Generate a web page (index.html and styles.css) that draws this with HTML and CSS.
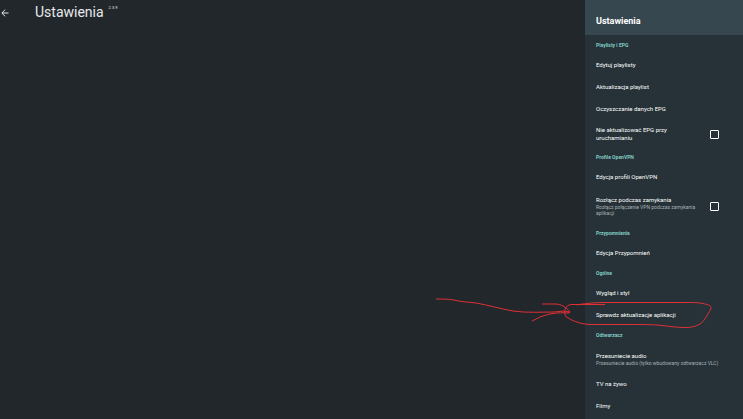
FILE: index.html
```html
<!DOCTYPE html>
<html lang="pl">
<head>
    <meta charset="UTF-8">
    <meta name="viewport" content="width=device-width, initial-scale=1.0">
    <title>Ustawienia</title>
    <link rel="stylesheet" href="styles.css">
</head>
<body>
    <main class="content">
        <header class="topbar">
            <button type="button" class="back" aria-label="Wstecz">
                <svg viewBox="0 0 8 8" width="8" height="8">
                    <path d="M7.5 4H1M4.1 .7L.8 4l3.3 3.3" />
                </svg>
            </button>
            <h1>Ustawienia</h1>
            <span class="version">2.3.9</span>
        </header>
    </main>

    <aside class="panel">
        <header class="panel-header">
            <h2>Ustawienia</h2>
        </header>
        <div class="list">
            <h3>Playlisty i EPG</h3>
            <button type="button" class="item">Edytuj playlisty</button>
            <button type="button" class="item">Aktualizacja playlist</button>
            <button type="button" class="item">Oczyszczanie danych EPG</button>
            <label class="item item-check">
                <span class="label">Nie aktualizować EPG przy uruchamianiu</span>
                <input type="checkbox">
            </label>

            <h3>Profile OpenVPN</h3>
            <button type="button" class="item">Edycja profili OpenVPN</button>
            <label class="item item-check item-tall">
                <span class="label">Rozłącz podczas zamykania
                    <small>Rozłącz połączenie VPN podczas zamykania aplikacji</small>
                </span>
                <input type="checkbox">
            </label>

            <h3>Przypomnienia</h3>
            <button type="button" class="item">Edycja Przypomnień</button>

            <h3>Ogólne</h3>
            <button type="button" class="item">Wygląd i styl</button>
            <button type="button" class="item">Sprawdz aktualizacje aplikacji</button>

            <h3>Odtwarzacz</h3>
            <button type="button" class="item item-sub">Przesuniecie audio
                <small>Przesuniecie audio (tylko wbudowany odtwarzacz VLC)</small>
            </button>
            <button type="button" class="item">TV na żywo</button>
            <button type="button" class="item">Filmy</button>
        </div>

        <!-- Hand-drawn arrow and circle around the update item -->
        <svg class="marker" viewBox="0 0 280 36" width="280" height="36" aria-hidden="true">
            <path d="M1 4c6 0 12 0 18 1 7 2 15 2 22 3 12 2 25 6 37 8 13 2 28 1 41 1l10-1 5 1" />
            <path d="M107 9h13c6 0 11 3 15 8l-1 1c-12-1-21 1-29 4l-8 4" />
            <path d="M170 9.500h-33c-4 0-6 2-7 5-1 3 0 5 1 7 5 4 13 7 23 8h46c12 0 18 0 27 1 9 1 15 2 23 2 8 0 14-2 18-6 3-4 6-9 8-13 1-3-4-4-8-5-5-1-10-1-16-1h-83c-9 0-18 1-25 2l-1 1" />
        </svg>
    </aside>
</body>
</html>
```

FILE: styles.css
```css
* {
    box-sizing: border-box;
}

body {
    margin: 0;
    display: flex;
    height: 100vh;
    overflow: hidden;
    background-color: #22272b;
    color: #e8eaeb;
    font-family: Roboto, "Noto Sans", sans-serif;
}

h1, h2, h3 {
    margin: 0;
    font-weight: 400;
}

button {
    border: 0;
    background: none;
    color: inherit;
    font-family: inherit;
    cursor: pointer;
}

/* Main area */
.content {
    flex: 1;
}

.topbar {
    display: flex;
    align-items: flex-start;
    padding: 4px 1px;
}

.back {
    padding: 5px 0;
    margin-right: 26px;
    line-height: 0;
}

.back path {
    fill: none;
    stroke: #e8eaeb;
    stroke-width: 1;
}

h1 {
    font-size: 14px;
    line-height: 16px;
}

.version {
    margin-left: 5px;
    font-size: 4px;
    line-height: 7px;
}

/* Settings panel */
.panel {
    position: relative;
    display: flex;
    flex-direction: column;
    width: 158px;
    background-color: #263238;
}

.panel-header {
    padding: 14px 11px 7px;
    background-color: #37474f;
}

h2 {
    color: #fff;
    font-size: 9px;
    line-height: 14px;
    font-weight: 700;
}

.list {
    flex: 1;
    min-height: 0;
    padding-top: 1px;
    overflow: hidden;
}

h3 {
    padding: 0 11px;
    color: #80cbc4;
    font-size: 5px;
    line-height: 18px;
    font-weight: 700;
}

.item {
    display: block;
    width: 100%;
    min-height: 22px;
    padding: 0 11px;
    color: #fff;
    font-size: 6px;
    font-weight: 400;
    line-height: 8px;
    text-align: left;
}

.item small {
    display: block;
    color: #a9b0b4;
    font-size: 5px;
    line-height: 6px;
}

.item-check {
    display: flex;
    align-items: center;
    justify-content: space-between;
    min-height: 28px;
    padding-right: 24px;
}

.item-check .label {
    width: 105px;
}

.item-tall {
    min-height: 36px;
}

.item-sub {
    min-height: 29px;
}

.item-check input {
    appearance: none;
    width: 9px;
    height: 9px;
    margin: 0;
    border: 1px solid #fff;
    border-radius: 1px;
}

.item-check input:checked {
    background-color: #80cbc4;
}

.marker {
    position: absolute;
    top: 295px;
    left: -150px;
    fill: none;
    stroke: #e03035;
    stroke-width: 1;
    pointer-events: none;
}
```
